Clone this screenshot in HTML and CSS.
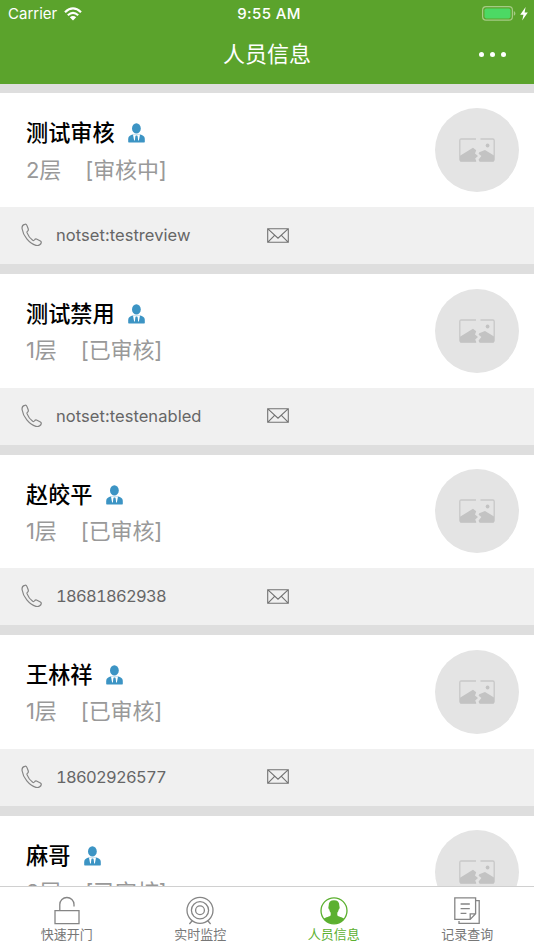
FILE: index.html
```
<!DOCTYPE html>
<html lang="zh-CN">

<head>
    <meta charset="UTF-8">
    <meta name="viewport" content="width=device-width, initial-scale=1.0">
    <title>人员信息</title>
    <link rel="stylesheet" href="styles.css">
</head>

<body>
    <!-- shared icons -->
    <svg class="sprite">
        <symbol id="user" viewBox="0 0 17 20">
            <ellipse cx="8.4" cy="5.4" rx="4.4" ry="5.2" fill="#3c94c4"/>
            <path d="M5 11.6 C1.5 12.4 .2 13.6 .2 16.5 V18.4 Q.2 19.6 1.4 19.6 H15.6 Q16.8 19.6 16.8 18.4 V16.5 C16.8 13.6 15.5 12.4 12 11.6Z" fill="#3c94c4"/>
            <path d="M5 11.4 H12 L10.9 17.6 H10.2 L9.3 13 H7.7 L6.8 17.6 H6.1Z" fill="#fff"/>
            <path d="M7.7 12.4 H9.3 L9.6 16.5 L8.5 18 L7.4 16.5Z" fill="#3c94c4"/>
        </symbol>
        <symbol id="phone" viewBox="0 0 22 24">
            <path d="M3.7 1.3 C1.8 1.7 .8 3.4 1.1 5.8 C2 12.5 8.2 20.4 14.9 22.3 C17.5 23 20.2 21.5 20.3 19.4 C20.3 18.8 19.9 18.3 19.4 18 L16 16.2 C14.9 15.7 14.1 16 13.4 17 C12.8 17.8 12.2 17.7 11.4 17.1 C8.8 15.1 7.1 12.5 6.1 9.9 C5.8 9 6 8.5 6.7 8 C7.5 7.4 7.5 6.8 7.2 5.8 L6 2.6 C5.6 1.6 4.8 1 3.7 1.3Z" fill="none" stroke="#858585" stroke-width="1.2"/>
        </symbol>
        <symbol id="mail" viewBox="0 0 22 15">
            <path d="M.7 .7 H21.3 V14.3 H.7Z M.9 .9 L11 10.2 L21.1 .9 M.9 14.1 L7.6 7.4 M21.1 14.1 L14.4 7.4" fill="none" stroke="#727272" stroke-width="1.1"/>
        </symbol>
        <symbol id="photo" viewBox="0 0 36 24">
            <path d="M17 1 H2.2 Q.8 1 .8 2.4 V21.6 Q.8 23 2.2 23 H17 M21.5 1 H33.8 Q35.2 1 35.2 2.4 V21.6 Q35.2 23 33.8 23 H21" fill="none" stroke="#c8c8c8" stroke-width="1.3"/>
            <path d="M1 17.8 L14 9.7 L17.2 12.2 L16 15.4 L19 18 L16.2 20.5 L17.4 23.5 H1Z M20.2 14.2 L26 12 L35 17.5 V23.5 H20.2 L19.6 21.5 L22.4 18 L19.6 15.8Z" fill="#c3c3c3"/>
            <circle cx="28.6" cy="7.5" r="1.9" fill="#c3c3c3"/>
        </symbol>
    </svg>

    <div class="app">
        <header class="header">
            <div class="status-bar">
                <div class="carrier">
                    <span>Carrier</span>
                    <svg class="wifi" viewBox="0 0 18 14">
                        <path d="M1 5.2 Q9 -2.4 17 5.2 M3.8 8.2 Q9 3.6 14.2 8.2" fill="none" stroke="#fff" stroke-width="2.2"/>
                        <path d="M5.8 10.3 Q9 7.6 12.2 10.3 L9 13.6Z" fill="#fff"/>
                    </svg>
                </div>
                <span class="time">9:55 AM</span>
                <div class="power">
                    <svg class="battery" viewBox="0 0 34 15">
                        <rect x=".6" y=".6" width="29.8" height="13.6" rx="3.4" fill="none" stroke="#a5cb85" stroke-width="1.2"/>
                        <rect x="2.5" y="2.4" width="26" height="10" rx="1.8" fill="#4cd964"/>
                        <path d="M31.8 5 Q33.4 5.6 33.4 7.4 Q33.4 9.2 31.8 9.8Z" fill="#a5cb85"/>
                    </svg>
                    <svg class="bolt" viewBox="0 0 8 14">
                        <path d="M5.6 0 L.2 7.8 H3.5 L2.2 13.6 L7.8 5.4 H4.6Z" fill="#fff"/>
                    </svg>
                </div>
            </div>
            <div class="nav-bar">
                <h1>人员信息</h1>
                <div class="more"><i></i><i></i><i></i></div>
            </div>
        </header>

        <main class="list">
            <section class="card">
                <div class="info">
                    <div>
                        <h2 class="name">测试审核<svg><use href="#user"/></svg></h2>
                        <p class="state"><span>2层</span><span>[审核中]</span></p>
                    </div>
                    <div class="avatar"><svg><use href="#photo"/></svg></div>
                </div>
                <div class="contact">
                    <svg class="phone"><use href="#phone"/></svg>
                    <span class="number">notset:testreview</span>
                    <svg class="mail"><use href="#mail"/></svg>
                </div>
            </section>

            <section class="card">
                <div class="info">
                    <div>
                        <h2 class="name">测试禁用<svg><use href="#user"/></svg></h2>
                        <p class="state"><span>1层</span><span>[已审核]</span></p>
                    </div>
                    <div class="avatar"><svg><use href="#photo"/></svg></div>
                </div>
                <div class="contact">
                    <svg class="phone"><use href="#phone"/></svg>
                    <span class="number">notset:testenabled</span>
                    <svg class="mail"><use href="#mail"/></svg>
                </div>
            </section>

            <section class="card">
                <div class="info">
                    <div>
                        <h2 class="name">赵皎平<svg><use href="#user"/></svg></h2>
                        <p class="state"><span>1层</span><span>[已审核]</span></p>
                    </div>
                    <div class="avatar"><svg><use href="#photo"/></svg></div>
                </div>
                <div class="contact">
                    <svg class="phone"><use href="#phone"/></svg>
                    <span class="number digits">18681862938</span>
                    <svg class="mail"><use href="#mail"/></svg>
                </div>
            </section>

            <section class="card">
                <div class="info">
                    <div>
                        <h2 class="name">王林祥<svg><use href="#user"/></svg></h2>
                        <p class="state"><span>1层</span><span>[已审核]</span></p>
                    </div>
                    <div class="avatar"><svg><use href="#photo"/></svg></div>
                </div>
                <div class="contact">
                    <svg class="phone"><use href="#phone"/></svg>
                    <span class="number digits">18602926577</span>
                    <svg class="mail"><use href="#mail"/></svg>
                </div>
            </section>

            <section class="card">
                <div class="info">
                    <div>
                        <h2 class="name">麻哥<svg><use href="#user"/></svg></h2>
                        <p class="state"><span>2层</span><span>[已审核]</span></p>
                    </div>
                    <div class="avatar"><svg><use href="#photo"/></svg></div>
                </div>
            </section>
        </main>

        <nav class="tabs">
            <a class="tab">
                <svg viewBox="0 0 28 30">
                    <path d="M2 14.6 H26 V27.6 H2Z M6.8 14.6 V8.6 A7.1 7.1 0 0 1 21 8.6 V10.6"/>
                </svg>
                <span>快速开门</span>
            </a>
            <a class="tab">
                <svg viewBox="0 0 28 30">
                    <circle cx="14" cy="14.3" r="13"/>
                    <circle cx="14" cy="14.3" r="8.6"/>
                    <circle cx="14" cy="14.3" r="4.4"/>
                    <path d="M6.2 24.8 L3.4 28 M21.8 24.8 L24.6 28"/>
                </svg>
                <span>实时监控</span>
            </a>
            <a class="tab active">
                <svg viewBox="0 0 28 30">
                    <circle cx="14" cy="14.8" r="13"/>
                    <path class="fill" d="M14 4.2 C17.8 4.2 19.6 6.4 19.3 10.2 C20 10.5 19.6 13 18.7 13.6 C18.4 15.2 18 16 17.3 16.8 V19.3 C18 20.8 22.4 21.2 24.3 22.8 A13 13 0 0 1 3.7 22.8 C5.6 21.2 10 20.8 10.7 19.3 V16.8 C10 16 9.6 15.2 9.3 13.6 C8.4 13 8 10.5 8.7 10.2 C8.4 6.4 10.2 4.2 14 4.2Z"/>
                </svg>
                <span>人员信息</span>
            </a>
            <a class="tab">
                <svg viewBox="0 0 28 30">
                    <path d="M1.8 1.8 H22.6 V17.8 L17.2 23.4 H1.8Z M22.6 17.8 H17.2 V23.4 M7.6 8 H16.8 M7.6 12.7 H16.8 M7.6 17.4 H13.4 M22.6 4.6 H26.2 V27.4 H6 V25"/>
                </svg>
                <span>记录查询</span>
            </a>
        </nav>
    </div>
</body>

</html>
```
FILE: styles.css
```
* {
    box-sizing: border-box;
}

body {
    margin: 0;
    background: #dedede;
    font-family: Inter, "Noto Sans CJK SC", sans-serif;
}

h1, h2, p {
    margin: 0;
}

svg {
    display: block;
    flex-shrink: 0;
}

.sprite {
    display: none;
}

.app {
    display: flex;
    flex-direction: column;
    height: 950px;
    overflow: hidden;
}

.header {
    flex-shrink: 0;
    height: 83.5px;
    background: #5ba32c;
    color: #fff;
}

.status-bar {
    display: grid;
    grid-template-columns: 1fr auto 1fr;
    align-items: center;
    height: 27px;
    padding: 0 6px 0 8px;
    font-size: 15px;
    line-height: 27px;
}

.carrier {
    display: flex;
    align-items: center;
    gap: 7px;
}

.wifi {
    width: 18px;
    height: 14px;
}

.time {
    padding-left: 2px;
    font-weight: 500;
    letter-spacing: 0.4px;
}

.power {
    display: flex;
    align-items: center;
    justify-content: flex-end;
    gap: 4px;
}

.battery {
    width: 34px;
    height: 15px;
}

.bolt {
    width: 8px;
    height: 14px;
}

.nav-bar {
    display: grid;
    grid-template-columns: 1fr auto 1fr;
    align-items: center;
    height: 54px;
    padding-right: 28px;
    padding-left: 28px;
}

.nav-bar h1 {
    grid-column: 2;
    font-size: 22px;
    font-weight: 400;
    line-height: 54px;
}

.more {
    display: flex;
    justify-content: flex-end;
    gap: 6px;
}

.more i {
    width: 5px;
    height: 5px;
    border-radius: 50%;
    background: #fff;
}

.list {
    flex: 1;
    min-height: 0;
    overflow: hidden;
}

.card {
    padding-top: 9.9px;
}

.info {
    display: flex;
    justify-content: space-between;
    height: 113.6px;
    padding: 14.7px 15px 0 26px;
    background: #fff;
}

.name {
    display: flex;
    align-items: center;
    gap: 13.5px;
    margin-top: 8.3px;
    font-size: 22.2px;
    font-weight: 500;
    line-height: 34px;
    color: #000;
}

.name svg {
    width: 17px;
    height: 20px;
}

.state {
    display: flex;
    gap: 24px;
    margin-top: 1.3px;
    font-size: 22px;
    line-height: 36px;
    color: #999;
    font-weight: 400;
    letter-spacing: -0.1px;
}

.avatar {
    display: flex;
    align-items: center;
    justify-content: center;
    width: 84px;
    height: 84px;
    border-radius: 50%;
    background: #e4e4e4;
}

.avatar svg {
    width: 36px;
    height: 24px;
}

.contact {
    display: flex;
    align-items: center;
    height: 57.1px;
    padding-bottom: 0.6px;
    padding-left: 20.6px;
    background: #f0f0f0;
    color: #666;
    font-size: 16.5px;
}

.phone {
    width: 22px;
    height: 24px;
}

.number {
    width: 211.4px;
    margin-left: 13.4px;
    letter-spacing: 0.05px;
}

.number.digits {
    font-variant-numeric: tabular-nums;
    letter-spacing: -0.7px;
}

.mail {
    width: 22px;
    height: 15px;
}

.tabs {
    display: flex;
    flex-shrink: 0;
    height: 64px;
    border-top: 1px solid #d0d0d0;
    background: #fff;
}

.tab {
    display: flex;
    flex: 1;
    flex-direction: column;
    align-items: center;
    padding-top: 9px;
    color: #777;
    font-size: 13px;
    line-height: 16px;
}

.tab svg {
    width: 28px;
    height: 30px;
    fill: none;
    stroke: #858585;
    stroke-width: 1.3;
}

.tab.active {
    color: #5cb030;
}

.tab.active svg {
    stroke: #5cb030;
}

.tab.active .fill {
    fill: #5cb030;
    stroke: none;
}
```
